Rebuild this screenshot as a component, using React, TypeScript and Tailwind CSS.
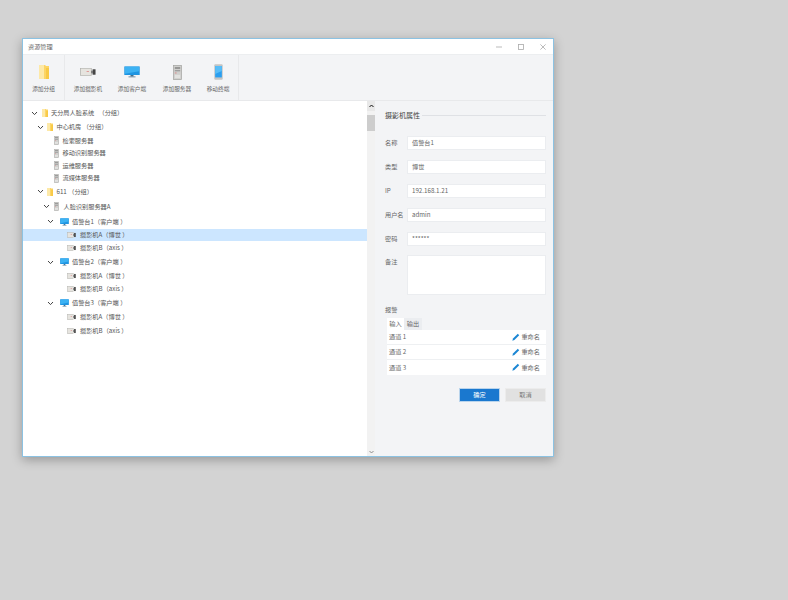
import React from "react";

const FONT = '"Noto Sans CJK SC", "Noto Sans", sans-serif';

function Folder({ w = 6, h = 8 }: { w?: number; h?: number }) {
  return (
    <svg width={w} height={h} viewBox="0 0 10 14" preserveAspectRatio="none">
      <path d="M0 0h6l1 1h3v13H0z" fill="#fcd566" />
      <path d="M0 0h5v14H0z" fill="#fde9a8" />
      <path d="M7 3h3v11H7z" fill="#f8c945" />
    </svg>
  );
}
function Camera({ w = 9, h = 6 }: { w?: number; h?: number }) {
  return (
    <svg width={w} height={h} viewBox="0 0 17 10" preserveAspectRatio="none">
      <rect x="0.5" y="0.5" width="11.5" height="9" fill="#e6e4df" stroke="#b1b1ad" strokeWidth="0.8" />
      <rect x="7" y="4" width="2.5" height="1" fill="#d88" />
      <rect x="12" y="3.4" width="1.4" height="3.2" fill="#666" />
      <rect x="13.4" y="1.6" width="3.1" height="6.8" fill="#444" />
    </svg>
  );
}
function Monitor({ w = 16, h = 12 }: { w?: number; h?: number }) {
  return (
    <svg width={w} height={h} viewBox="0 0 16 14" preserveAspectRatio="none">
      <rect x="0.3" y="0.5" width="15.4" height="10" fill="#1f95e2" />
      <path d="M1 1h14v5L1 9z" fill="#3cb2f3" />
      <rect x="6.5" y="10.5" width="3" height="1.7" fill="#3d6f8f" />
      <rect x="4.5" y="12.2" width="7" height="1" fill="#5f7f95" />
    </svg>
  );
}
function Server({ w = 5, h = 9 }: { w?: number; h?: number }) {
  return (
    <svg width={w} height={h} viewBox="0 0 10 16" preserveAspectRatio="none">
      <rect x="0.5" y="0.5" width="9" height="15" fill="#cfcfcd" stroke="#a5a5a3" strokeWidth="0.8" />
      <rect x="2" y="2.5" width="6" height="1.4" fill="#7a7a7a" />
      <rect x="2" y="5.5" width="6" height="1.2" fill="#969696" />
      <rect x="2" y="8" width="2" height="1" fill="#d98a8a" />
      <rect x="2" y="10.5" width="6" height="3.5" fill="#e2e2e0" />
    </svg>
  );
}
function Phone() {
  return (
    <svg width="9" height="16" viewBox="0 0 10 16" preserveAspectRatio="none">
      <rect x="0.3" y="0.3" width="9.4" height="15.4" rx="1.2" fill="#c4c4c4" />
      <rect x="1.3" y="2" width="7.4" height="11.4" fill="#2a9ff0" />
      <path d="M1.3 2h7.4v5l-7.4 3z" fill="#58bdf7" />
    </svg>
  );
}
function Chevron() {
  return (
    <svg width="7" height="5" viewBox="0 0 7 5" className="shrink-0">
      <path d="M1 1L3.5 3.6L6 1" fill="none" stroke="#444" strokeWidth="1" />
    </svg>
  );
}
function Pencil() {
  return (
    <svg width="8" height="8" viewBox="0 0 8 8">
      <path d="M0.3 7.7L1 5.6L5.8 0.8L7.2 2.2L2.4 7z" fill="#1a86d4" />
    </svg>
  );
}

type Kind = "folder" | "server" | "monitor" | "camera";
type Row = {
  label: string;
  kind: Kind;
  indent: number;
  chevron?: boolean;
  h: number;
  selected?: boolean;
  iconMl: number;
  labelMl: number;
};

const leaf = { kind: "server" as Kind, indent: 19.5, iconMl: 1, labelMl: 1 };
const client = { kind: "monitor" as Kind, indent: 24, chevron: true, iconMl: 4.5, labelMl: 2.5 };
const cam = { kind: "camera" as Kind, indent: 35, iconMl: 1, labelMl: 3 };
const group = { kind: "folder" as Kind, indent: 13.5, chevron: true, iconMl: 1, labelMl: 1 };

const rows: Row[] = [
  { label: "天分局人脸系统   （分组）", kind: "folder", indent: 8, chevron: true, iconMl: 1, labelMl: 1, h: 14 },
  { ...group, label: "中心机房 （分组）", h: 14 },
  { ...leaf, label: "检索服务器", h: 13 },
  { ...leaf, label: "移动识别服务器", h: 12 },
  { ...leaf, label: "运维服务器", h: 13 },
  { ...leaf, label: "流媒体服务器", h: 12 },
  { ...group, label: "611 （分组）", h: 15 },
  { label: "人脸识别服务器A", kind: "server", indent: 20, chevron: true, iconMl: 1, labelMl: 1.5, h: 15 },
  { ...client, label: "值警台1（客户端 ）", h: 15 },
  { ...cam, label: "摄影机A（博世 ）", h: 12, selected: true },
  { ...cam, label: "摄影机B（axis ）", h: 14 },
  { ...client, label: "值警台2（客户端 ）", h: 14 },
  { ...cam, label: "摄影机A（博世 ）", h: 13 },
  { ...cam, label: "摄影机B（axis ）", h: 14 },
  { ...client, label: "值警台3（客户端 ）", h: 14 },
  { ...cam, label: "摄影机A（博世 ）", h: 14 },
  { ...cam, label: "摄影机B（axis ）", h: 14 },
];

function RowIcon({ kind }: { kind: Kind }) {
  if (kind === "folder") return <Folder />;
  if (kind === "server") return <Server />;
  if (kind === "monitor") return <Monitor w={9} h={8} />;
  return <Camera />;
}

function TreeRow({ row }: { row: Row }) {
  return (
    <div
      className={`flex items-center text-[6.2px] text-[#555] whitespace-pre ${row.selected ? "bg-[#cce6ff]" : ""}`}
      style={{ height: row.h, paddingLeft: row.indent }}
    >
      {row.chevron ? <Chevron /> : <span className="w-[7px] shrink-0" />}
      <span className="w-[11px] flex justify-center shrink-0" style={{ marginLeft: row.iconMl }}>
        <RowIcon kind={row.kind} />
      </span>
      <span style={{ marginLeft: row.labelMl }}>{row.label}</span>
    </div>
  );
}

function ToolButton({ label, icon, w }: { label: string; icon: React.ReactNode; w: number }) {
  return (
    <div className="flex flex-col items-center" style={{ width: w }}>
      <div className="h-[20px] flex items-center justify-center mt-[7px]">{icon}</div>
      <div className="text-[5.7px] text-[#666] mt-[2px] leading-[9px]">{label}</div>
    </div>
  );
}

function Field({ label, value, mt }: { label: string; value: string; mt: number }) {
  return (
    <div className="flex items-center" style={{ marginTop: mt }}>
      <div className="w-[22px] text-[6.2px] text-[#666]">{label}</div>
      <div className="flex-1 h-[14px] bg-white border border-[#ebedf0] flex items-center pl-[4px] text-[6.2px] text-[#666]">
        {value}
      </div>
    </div>
  );
}

function Channel({ name }: { name: string }) {
  return (
    <div className="h-[15px] flex items-center justify-between pl-[2px] pr-[6px] border-b border-[#eef0f2] last:border-b-0 text-[6.2px] text-[#666]">
      <span>{name}</span>
      <span className="flex items-center gap-[1px]">
        <Pencil />
        重命名
      </span>
    </div>
  );
}

export default function App() {
  return (
    <div className="w-[788px] h-[600px] bg-[#d3d3d3] pt-[38px] pl-[22px] overflow-hidden" style={{ fontFamily: FONT }}>
      <div className="w-[532px] h-[419px] bg-white border border-[#8cc2e2] shadow-[0_3px_10px_rgba(0,0,0,0.28)] flex flex-col">
        <div className="h-[16px] flex items-center justify-between shrink-0 border-b border-[#eceef0] pl-[5px]">
          <span className="text-[6.2px] text-[#666]">资源管理</span>
          <div className="flex items-center gap-[16px] pr-[7px]">
            <svg width="6" height="6" viewBox="0 0 6 6"><path d="M0 3h6" stroke="#aaa" strokeWidth="0.8" /></svg>
            <svg width="6" height="6" viewBox="0 0 6 6"><rect x="0.5" y="0.5" width="5" height="5" fill="none" stroke="#aaa" strokeWidth="0.8" /></svg>
            <svg width="6" height="6" viewBox="0 0 6 6"><path d="M0.4 0.4l5.2 5.2M5.6 0.4l-5.2 5.2" stroke="#aaa" strokeWidth="0.8" /></svg>
          </div>
        </div>
        <div className="h-[46px] bg-[#f3f4f6] border-b border-[#e8e9eb] flex shrink-0">
          <div className="w-[42px] border-r border-[#e8e9eb] flex justify-center">
            <ToolButton label="添加分组" w={42} icon={<Folder w={10} h={14} />} />
          </div>
          <div className="w-[174px] border-r border-[#e8e9eb] flex pl-[1px]">
            <ToolButton label="添加摄影机" w={44} icon={<Camera w={16} h={8} />} />
            <ToolButton label="添加客户端" w={44} icon={<Monitor />} />
            <ToolButton label="添加服务器" w={46} icon={<Server w={9} h={15} />} />
            <ToolButton label="移动终端" w={36} icon={<Phone />} />
          </div>
        </div>
        <div className="flex-1 flex min-h-0">
          <div className="w-[344px] bg-white pt-[5px] shrink-0">
            {rows.map((r, i) => (
              <TreeRow key={i} row={r} />
            ))}
          </div>
          <div className="w-[8px] bg-[#f2f2f2] flex flex-col items-center shrink-0">
            <div className="h-[10px] w-full bg-[#e8e8e8] flex items-center justify-center">
              <svg width="5" height="4" viewBox="0 0 5 4"><path d="M0.5 3L2.5 1L4.5 3" fill="none" stroke="#111" strokeWidth="1" /></svg>
            </div>
            <div className="mt-[4px] h-[16px] w-full bg-[#cdcdcd]" />
            <div className="mt-auto mb-[1px] h-[6px] flex items-center">
              <svg width="5" height="4" viewBox="0 0 5 4"><path d="M0.5 1L2.5 3L4.5 1" fill="none" stroke="#777" strokeWidth="0.8" /></svg>
            </div>
          </div>
          <div className="flex-1 bg-[#f3f4f6] pl-[10px] pr-[7px] pt-[9px]">
            <div className="flex items-center h-[10px]">
              <span className="text-[7px] text-[#444]">摄影机属性</span>
              <span className="flex-1 h-px bg-[#dfe1e5] ml-[2px]" />
            </div>
            <Field label="名称" value="值警台1" mt={16} />
            <Field label="类型" value="博世" mt={10} />
            <Field label="IP" value="192.168.1.21" mt={10} />
            <Field label="用户名" value="admin" mt={10} />
            <Field label="密码" value="******" mt={10} />
            <div className="flex mt-[9px]">
              <div className="w-[22px] text-[6.2px] text-[#666] pt-[2px]">备注</div>
              <div className="flex-1 h-[40px] bg-white border border-[#ebedf0]" />
            </div>
            <div className="mt-[10px] text-[6.2px] text-[#666] leading-[9px]">报警</div>
            <div className="ml-[2px] mt-[4px] flex text-[6.2px] text-[#666] h-[12px]">
              <div className="w-[17px] bg-white flex items-center justify-center">输入</div>
              <div className="w-[18px] bg-[#ebedf0] flex items-center justify-center">输出</div>
            </div>
            <div className="ml-[2px] bg-white">
              <Channel name="通道 1" />
              <Channel name="通道 2" />
              <Channel name="通道 3" />
            </div>
            <div className="flex justify-end gap-[5px] mt-[13px]">
              <div className="w-[41px] h-[14px] bg-[#1a78cf] border border-[#b9d4ec] text-white text-[6.2px] flex items-center justify-center">确定</div>
              <div className="w-[41px] h-[14px] bg-[#e1e1e1] border border-[#ececec] text-[#777] text-[6.2px] flex items-center justify-center">取消</div>
            </div>
          </div>
        </div>
      </div>
    </div>
  );
}
